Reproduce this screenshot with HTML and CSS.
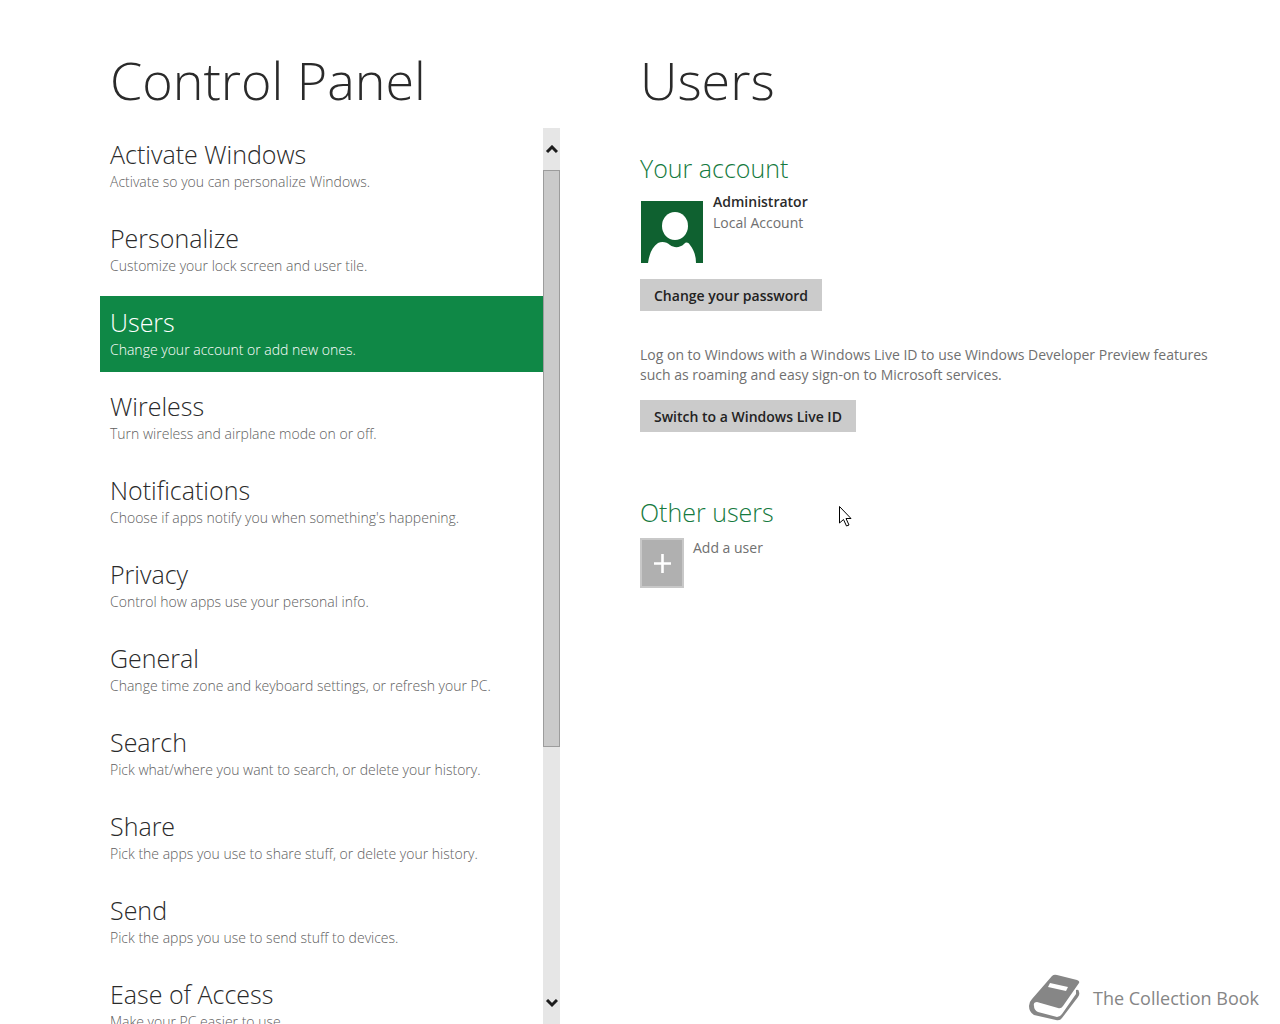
FILE: index.html
```html
<!DOCTYPE html>
<html lang="en">
<head>
    <meta charset="UTF-8">
    <meta name="viewport" content="width=device-width, initial-scale=1.0">
    <title>Control Panel</title>
    <link rel="stylesheet" href="styles.css">
</head>
<body>

    <div class="container">

        <aside class="sidebar">
            <h1>Control Panel</h1>
            <div class="scroll-area">
                <nav class="menu">
                    <a href="#activate" class="menu-item">
                        <span class="menu-title">Activate Windows</span>
                        <span class="menu-text">Activate so you can personalize Windows.</span>
                    </a>
                    <a href="#personalize" class="menu-item">
                        <span class="menu-title">Personalize</span>
                        <span class="menu-text">Customize your lock screen and user tile.</span>
                    </a>
                    <a href="#users" class="menu-item active">
                        <span class="menu-title">Users</span>
                        <span class="menu-text">Change your account or add new ones.</span>
                    </a>
                    <a href="#wireless" class="menu-item">
                        <span class="menu-title">Wireless</span>
                        <span class="menu-text">Turn wireless and airplane mode on or off.</span>
                    </a>
                    <a href="#notifications" class="menu-item">
                        <span class="menu-title">Notifications</span>
                        <span class="menu-text">Choose if apps notify you when something's happening.</span>
                    </a>
                    <a href="#privacy" class="menu-item">
                        <span class="menu-title">Privacy</span>
                        <span class="menu-text">Control how apps use your personal info.</span>
                    </a>
                    <a href="#general" class="menu-item">
                        <span class="menu-title">General</span>
                        <span class="menu-text">Change time zone and keyboard settings, or refresh your PC.</span>
                    </a>
                    <a href="#search" class="menu-item">
                        <span class="menu-title">Search</span>
                        <span class="menu-text">Pick what/where you want to search, or delete your history.</span>
                    </a>
                    <a href="#share" class="menu-item">
                        <span class="menu-title">Share</span>
                        <span class="menu-text">Pick the apps you use to share stuff, or delete your history.</span>
                    </a>
                    <a href="#send" class="menu-item">
                        <span class="menu-title">Send</span>
                        <span class="menu-text">Pick the apps you use to send stuff to devices.</span>
                    </a>
                    <a href="#ease" class="menu-item">
                        <span class="menu-title">Ease of Access</span>
                        <span class="menu-text">Make your PC easier to use.</span>
                    </a>
                </nav>
                <div class="scrollbar">
                    <button type="button" class="scroll-button" aria-label="Scroll up">
                        <svg width="13" height="9" viewBox="0 0 13 9"><path d="M2 7 L7 2 L12 7" fill="none" stroke="#1c1c1c" stroke-width="3"/></svg>
                    </button>
                    <div class="scroll-track">
                        <div class="scroll-thumb"></div>
                    </div>
                    <button type="button" class="scroll-button" aria-label="Scroll down">
                        <svg width="13" height="9" viewBox="0 0 13 9"><path d="M2 1 L7 6 L12 1" fill="none" stroke="#1c1c1c" stroke-width="3"/></svg>
                    </button>
                </div>
            </div>
        </aside>

        <main class="content">
            <h1>Users</h1>

            <section class="account">
                <h2>Your account</h2>
                <div class="profile">
                    <svg class="avatar" width="62" height="62" viewBox="0 0 62 62">
                        <rect width="62" height="62" fill="#0f6130"/>
                        <ellipse cx="34" cy="25" rx="13" ry="14" fill="#fff"/>
                        <path d="M7 62 C8 54 11 46 17 42 C21 40 26 41 29 44 C33 47 39 47 43 43 C45 41 47 41 49 44 C53 49 55 55 55 62 Z" fill="#fff"/>
                    </svg>
                    <div>
                        <p class="user-name">Administrator</p>
                        <p>Local Account</p>
                    </div>
                </div>
                <button type="button" class="btn">Change your password</button>
                <p class="info">Log on to Windows with a Windows Live ID to use Windows Developer Preview features such as roaming and easy sign-on to Microsoft services.</p>
                <button type="button" class="btn">Switch to a Windows Live ID</button>
            </section>

            <section class="others">
                <h2>Other users</h2>
                <div class="add-user">
                    <button type="button" class="add-button" id="add" aria-label="Add a user">
                        <svg width="18" height="20" viewBox="0 0 18 20"><path d="M9.5 1 V20 M1 10.5 H18" stroke="#fff" stroke-width="2.6"/></svg>
                    </button>
                    <label for="add">Add a user</label>
                </div>
            </section>
        </main>
    </div>

    <footer class="brand">
        <svg width="52" height="48" viewBox="0 0 52 48">
            <path d="M24 2 Q26 0 29 1 L49 6 Q52 7 51 9 L35 32 Q33 35 30 34 L9 28 Q5 28 6 32 Q6 36 10 38 L29 43 Q32 43 34 40 L48 20 L48 16 Q51 15 51 18 Q52 20 50 23 L34 44 Q32 47 28 46 L6 41 Q1 38 1 32 Q1 28 4 25 Z" fill="#868686"/>
            <path d="M22 9 L40 13 L38 17 L20 13 Z" fill="#fff"/>
        </svg>
        <span>The Collection Book</span>
    </footer>

    <svg class="cursor" width="13" height="21" viewBox="0 0 13 21">
        <path d="M.5 .5 V17 L4.5 13.5 L7.5 20 L10 19 L7 12.5 H12 Z" fill="#fff" stroke="#000"/>
    </svg>

</body>
</html>
```

FILE: styles.css
```css
body {
    margin: 0;
    height: 100vh;
    overflow: hidden;
    font-family: "Open Sans", "Noto Sans", sans-serif;
    font-size: 14px;
    line-height: 20px;
    color: #707070;
    background-color: white;
}

h1, h2, p {
    margin: 0;
}

h1 {
    font-size: 52px;
    line-height: 72px;
    font-weight: 300;
    color: #2a2a2a;
}

h2 {
    font-size: 25px;
    line-height: 36px;
    font-weight: 300;
    color: #157a40;
}

.container {
    display: grid;
    grid-template-columns: 460px 1fr;
    gap: 80px;
    height: 100%;
    padding: 0 40px 0 100px;
    box-sizing: border-box;
}

.sidebar {
    display: flex;
    flex-direction: column;
    gap: 12px;
    min-height: 0;
    padding-top: 44px;
    height: 100vh;
    box-sizing: border-box;
}

.sidebar h1 {
    padding-left: 10px;
}

.scroll-area {
    display: flex;
    flex: 1;
    min-height: 0;
}

.menu {
    flex: 1;
    display: flex;
    flex-direction: column;
    gap: 8px;
    overflow: hidden;
}

.menu-item {
    display: flex;
    flex-direction: column;
    flex-shrink: 0;
    gap: 2px;
    height: 76px;
    padding: 10px;
    box-sizing: border-box;
    font-weight: 300;
    color: #606060;
    text-decoration: none;
    white-space: nowrap;
}

.menu-title {
    font-size: 25px;
    line-height: 32px;
    color: #2a2a2a;
}

.menu-text {
    font-size: 14px;
    line-height: 20px;
}

.menu-item.active,
.active .menu-title {
    background-color: #0f8846;
    color: white;
}

/* Scrollbar */
.scrollbar {
    display: flex;
    flex-direction: column;
    width: 17px;
    background-color: #e6e6e6;
}

.scroll-button {
    display: flex;
    align-items: center;
    justify-content: center;
    height: 42px;
    padding: 0;
    border: none;
    background: none;
}

.scroll-track {
    flex: 1;
}

.scroll-thumb {
    height: 71%;
    box-sizing: border-box;
    border: 1px solid #9c9c9c;
    background-color: #cacaca;
}

/* Right side */
.content {
    padding-top: 44px;
}

.account {
    padding-top: 34px;
}

.profile {
    display: flex;
    gap: 10px;
    padding-bottom: 16px;
}

.avatar {
    margin: 15px 0 0 1px;
}

.profile p {
    padding-top: 1px;
}

.profile .user-name {
    padding-top: 6px;
    font-weight: 600;
    color: #2a2a2a;
}

.btn {
    display: block;
    height: 32px;
    padding: 0 14px;
    border: none;
    background-color: #cbcbcb;
    color: #222;
    font-family: inherit;
    font-size: 14px;
    font-weight: 600;
}

.info {
    padding: 34px 0 15px;
}

.others {
    padding-top: 62px;
}

.add-user {
    display: flex;
    align-items: flex-start;
    gap: 9px;
    padding-top: 8px;
}

.add-button {
    display: flex;
    align-items: center;
    justify-content: center;
    width: 44px;
    height: 50px;
    padding: 0;
    border: 2px solid #c8c8c8;
    background-color: #b0b0b0;
}

/* Badge over the bottom corner */
.brand {
    position: absolute;
    right: 21px;
    bottom: 2px;
    display: flex;
    align-items: center;
    gap: 13px;
    font-size: 18px;
    color: #868686;
}

.cursor {
    position: absolute;
    left: 839px;
    top: 506px;
}
```
